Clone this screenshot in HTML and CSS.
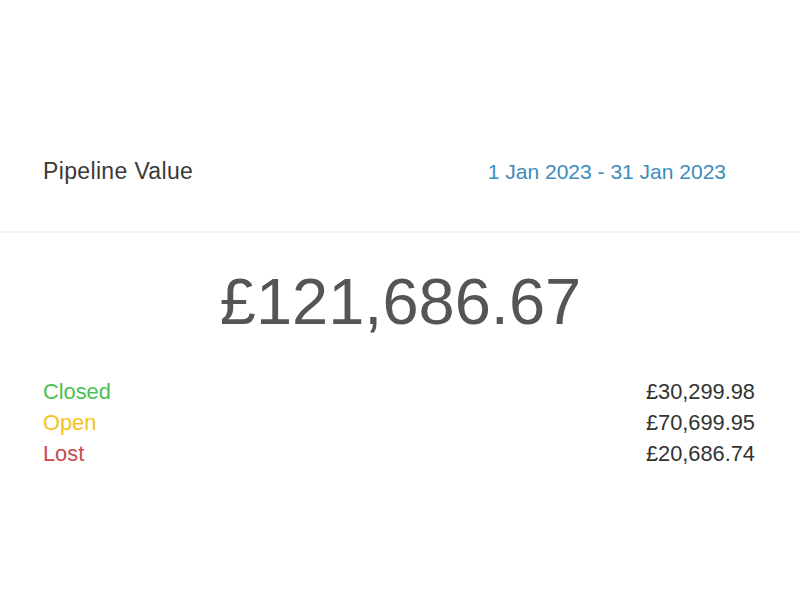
FILE: index.html
```html
<!DOCTYPE html>
<html lang="en">
<head>
<meta charset="utf-8">
<title>Pipeline Value</title>
<link rel="stylesheet" href="styles.css">
</head>
<body>
  <div class="card">
    <div class="card-header">
      <div class="title">Pipeline Value</div>
      <div class="range">1 Jan 2023 - 31 Jan 2023</div>
    </div>
    <div class="card-body">
      <div class="total">£121,686.67</div>
      <ul class="breakdown">
        <li class="row"><span class="label closed">Closed</span><span class="amount">£30,299.98</span></li>
        <li class="row"><span class="label open">Open</span><span class="amount">£70,699.95</span></li>
        <li class="row"><span class="label lost">Lost</span><span class="amount">£20,686.74</span></li>
      </ul>
    </div>
  </div>
</body>
</html>
```

FILE: styles.css
```css
html, body {
  margin: 0;
  padding: 0;
  background: #ffffff;
}

body {
  font-family: "Liberation Sans", Arial, Helvetica, sans-serif;
  color: #333333;
}

.card-header {
  display: flex;
  justify-content: space-between;
  align-items: baseline;
  padding: 156px 74px 44px 43px;
  border-bottom: 2px solid #f1f3f3;
}

.title {
  font-size: 23px;
  line-height: 30px;
  letter-spacing: 0.35px;
  color: #3a3a3a;
}

.range {
  font-size: 21px;
  line-height: 30px;
  color: #3b8dbd;
}

.card-body {
  padding: 36px 45px 0 43px;
}

.total {
  text-align: center;
  font-size: 65px;
  line-height: 65px;
  padding-left: 3px;
  color: #555555;
  margin-bottom: 42px;
}

.breakdown {
  list-style: none;
  margin: 0;
  padding: 0;
}

.row {
  display: flex;
  justify-content: space-between;
  font-size: 21.8px;
  line-height: 31px;
}

.amount {
  color: #333333;
}

.closed { color: #4cbf55; }
.open { color: #f2c31a; }
.lost { color: #c94a4c; }
```
